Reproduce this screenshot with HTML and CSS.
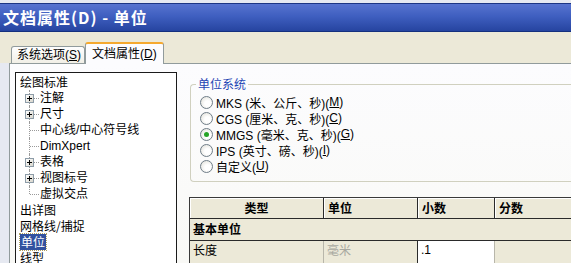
FILE: index.html
```html
<!DOCTYPE html>
<html lang="zh">
<head>
    <meta charset="UTF-8">
    <title>文档属性(D) - 单位</title>
    <link rel="stylesheet" href="styles.css">
</head>
<body>

    <div class="window">
        <!-- Title bar -->
        <div class="titlebar">文档属性(D) - 单位</div>

        <!-- Tabs -->
        <div class="tab-strip">
            <div class="tab">系统选项(<u>S</u>)</div>
            <div class="tab active">文档属性(<u>D</u>)</div>
        </div>

        <div class="panel">
            <!-- Left: option tree -->
            <div class="tree">
                <div class="node">绘图标准</div>
                <div class="child"><span class="twig"><span class="plus"></span></span>注解</div>
                <div class="child"><span class="twig"><span class="plus"></span></span>尺寸</div>
                <div class="child"><span class="twig"></span>中心线/中心符号线</div>
                <div class="child"><span class="twig"></span>DimXpert</div>
                <div class="child"><span class="twig"><span class="plus"></span></span>表格</div>
                <div class="child"><span class="twig"><span class="plus"></span></span>视图标号</div>
                <div class="child last"><span class="twig"></span>虚拟交点</div>
                <div class="node">出详图</div>
                <div class="node">网格线/捕捉</div>
                <div class="node"><span class="selected">单位</span></div>
                <div class="node">线型</div>
            </div>

            <!-- Right: unit settings -->
            <div class="settings">
                <fieldset class="group">
                    <legend>单位系统</legend>
                    <div class="radio-row"><span class="radio"></span>MKS (米、公斤、秒)(<u>M</u>)</div>
                    <div class="radio-row"><span class="radio"></span>CGS (厘米、克、秒)(<u>C</u>)</div>
                    <div class="radio-row"><span class="radio checked"></span>MMGS (毫米、克、秒)(<u>G</u>)</div>
                    <div class="radio-row"><span class="radio"></span>IPS (英寸、磅、秒)(<u>I</u>)</div>
                    <div class="radio-row"><span class="radio"></span>自定义(<u>U</u>)</div>
                </fieldset>

                <div class="unit-table">
                    <div class="th center">类型</div>
                    <div class="th">单位</div>
                    <div class="th">小数</div>
                    <div class="th">分数</div>

                    <div class="section">基本单位</div>

                    <div class="td">长度</div>
                    <div class="td muted">毫米</div>
                    <div class="td edit">.1</div>
                    <div class="td"></div>
                </div>
            </div>
        </div>
    </div>

</body>
</html>
```

FILE: styles.css
```css
/* Basic Reset */
* {
    margin: 0;
    padding: 0;
    box-sizing: border-box;
}

body {
    font-family: "Liberation Sans", "Noto Sans CJK SC", sans-serif;
    font-size: 12px;
    color: #000;
    background-color: #e6e9f1;
    width: 571px;
    height: 263px;
    overflow: hidden;
}

.window {
    padding-top: 3px;
    width: 571px;
    height: 263px;
    overflow: hidden;
}

.titlebar {
    height: 29px;
    padding-left: 3px;
    border-top: 1px solid #1c3584;
    border-bottom: 1px solid #15307e;
    background: linear-gradient(#5773cf, #3f5fc0 45%, #2644a0);
    color: #fff;
    font-family: "Noto Sans CJK SC", sans-serif;
    font-weight: bold;
    font-size: 16px;
    letter-spacing: 1px;
    line-height: 27px;
}

.tab-strip {
    display: flex;
    align-items: flex-end;
    height: 31px;
    padding-left: 11px;
    background-color: #ece9d8;
}

.tab {
    height: 17px;
    padding: 0 3px 0 5px;
    line-height: 16px;
    border: 1px solid #919b9c;
    border-bottom: none;
    border-radius: 3px 3px 0 0;
    background: linear-gradient(#fefefe, #f1efe6);
}

.tab.active {
    height: 22px;
    padding: 0 6px;
    line-height: 20px;
    border-top: 2px solid #f5a92e;
    background: #fcfcfe;
    margin-bottom: -1px;
    position: relative;
}

.panel {
    display: flex;
    align-items: flex-start;
    height: 200px;
    margin-left: 9px;
    padding: 8px 0 0 5px;
    overflow: hidden;
    border-top: 1px solid #919b9c;
    border-left: 1px solid #919b9c;
    background: linear-gradient(#fcfcfe, #f9f9f6);
}

/* Tree */
.tree {
    width: 162px;
    height: 220px;
    flex-shrink: 0;
    padding: 1px 0 0 4px;
    border: 1px solid #1b1b1b;
    background-color: #fff;
    font-family: "Noto Sans CJK SC", sans-serif;
}

.node, .child {
    height: 16px;
    line-height: 16px;
    white-space: nowrap;
}

.child {
    display: flex;
    align-items: center;
    font-family: "Liberation Sans", "Noto Sans CJK SC", sans-serif;
}

.twig {
    position: relative;
    width: 20px;
    height: 16px;
    flex-shrink: 0;
}

.twig::before {
    content: "";
    position: absolute;
    left: 9px;
    top: 0;
    height: 16px;
    border-left: 1px dotted #9a9a9a;
}

.child.last .twig::before {
    height: 8px;
}

.twig::after {
    content: "";
    position: absolute;
    left: 10px;
    top: 8px;
    width: 9px;
    border-top: 1px dotted #9a9a9a;
}

.plus {
    position: absolute;
    left: 5px;
    top: 4px;
    width: 9px;
    height: 9px;
    border: 1px solid #8d9ca8;
    background: linear-gradient(135deg, #fff, #d8d6cc);
    z-index: 1;
}

.plus::before {
    content: "";
    position: absolute;
    left: 1px;
    top: 3px;
    width: 5px;
    border-top: 1px solid #000;
}

.plus::after {
    content: "";
    position: absolute;
    left: 3px;
    top: 1px;
    height: 5px;
    border-left: 1px solid #000;
}

.selected {
    display: inline-block;
    height: 16px;
    padding: 0 1px;
    background-color: #31519f;
    color: #fff;
    outline: 1px dotted #b0a060;
}

/* Right side */
.settings {
    margin-left: 13px;
    width: 386px;
    flex-shrink: 0;
}

.group {
    margin-top: 5px;
    padding: 3px 0 7px 9px;
    border: 1px solid #d0d0bf;
    border-right: none;
    border-radius: 4px 0 0 4px;
}

.group legend {
    margin-left: -4px;
    padding: 0 2px;
    line-height: 14px;
    color: #1e45b4;
    font-family: "Noto Sans CJK SC", sans-serif;
}

.radio-row {
    display: flex;
    align-items: center;
    height: 16px;
    white-space: nowrap;
}

.radio {
    width: 13px;
    height: 13px;
    margin-right: 3px;
    border: 1px solid #6f7d88;
    border-radius: 50%;
    background: radial-gradient(circle at 60% 60%, #fff 30%, #dcdbd3);
    position: relative;
}

.radio.checked::after {
    content: "";
    position: absolute;
    left: 3px;
    top: 3px;
    width: 5px;
    height: 5px;
    border-radius: 50%;
    background: #27a427;
}

/* Unit table */
.unit-table {
    display: grid;
    grid-template-columns: 134px 94px 77px 82px;
    margin: 15px 0 0 -1px;
    border-top: 1px solid #3a3a3a;
    border-left: 1px solid #3a3a3a;
    font-family: "Noto Sans CJK SC", sans-serif;
}

.th {
    height: 21px;
    padding-left: 4px;
    line-height: 20px;
    font-weight: bold;
    background-color: #ece9d8;
    border-right: 1px solid #2a2a2a;
    border-bottom: 1px solid #2a2a2a;
    box-shadow: inset 1px 1px #fff;
}

.th:last-of-type {
    border-right: none;
}

.th.center {
    text-align: center;
    padding-left: 0;
}

.section {
    grid-column: 1 / -1;
    height: 22px;
    padding-left: 3px;
    line-height: 19px;
    font-weight: bold;
    background-color: #ece9d8;
    border-bottom: 1px solid #2a2a2a;
}

.td {
    height: 22px;
    padding-left: 3px;
    line-height: 18px;
    background-color: #ece9d8;
    border-right: 1px solid #b8b6aa;
}

.td:last-child {
    border-right: none;
}

.td.muted {
    color: #a8a8a0;
    border-right: 1px solid #2a2a2a;
}

.td.edit {
    background-color: #fff;
    font-family: "Liberation Sans", sans-serif;
}
```
